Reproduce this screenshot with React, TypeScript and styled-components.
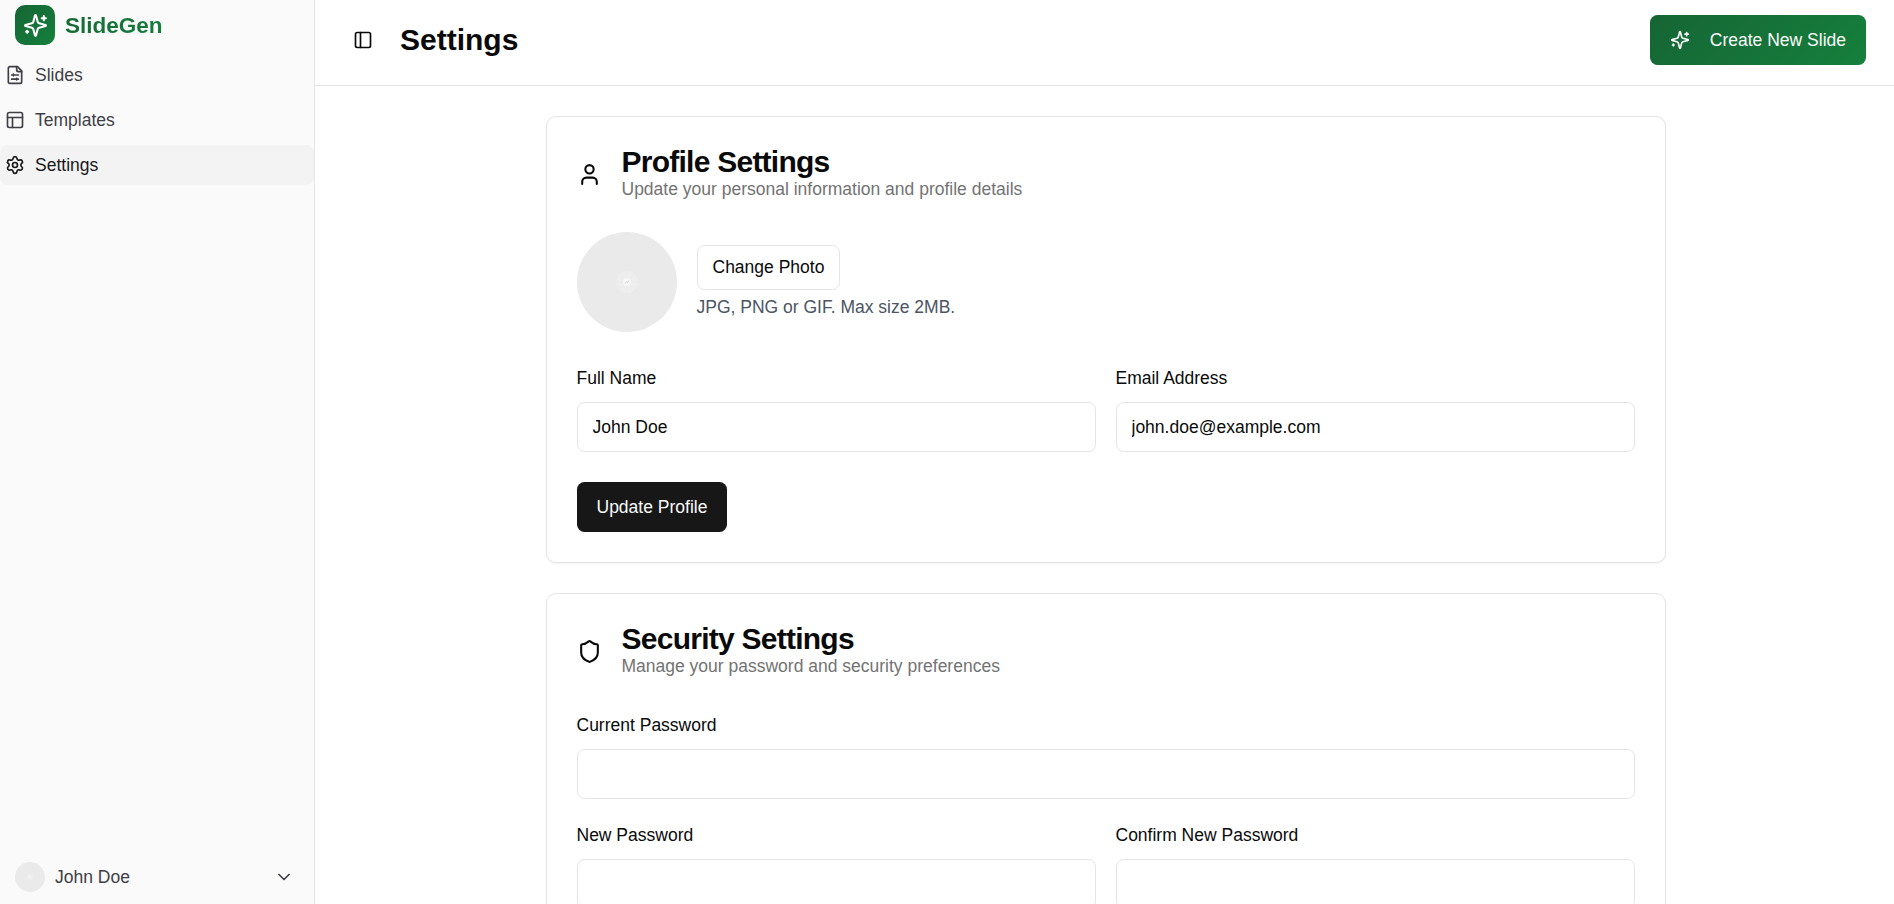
import React from 'react';
import styled, { createGlobalStyle, css } from 'styled-components';
import { ChevronDown, PanelLeft, Settings, Shield, User } from 'lucide-react';

const GlobalStyle = createGlobalStyle`
  *, *::before, *::after { box-sizing: border-box; }
  body {
    margin: 0;
    background: #fff;
    color: #0a0a0a;
    font-family: "Liberation Sans", Arial, Helvetica, sans-serif;
    font-size: 20px;
    line-height: 30px;
    overflow: hidden;
  }
  button, input { font: inherit; color: inherit; }
  svg { flex-shrink: 0; display: block; }
`;

const green = css`linear-gradient(135deg, #166534, #15803d)`;

const Page = styled.div`
  display: flex;
  height: 100vh;
  overflow: hidden;
`;

const Sidebar = styled.aside`
  display: flex;
  flex-direction: column;
  flex: 0 0 315px;
  background: #fafafa;
  border-right: 1px solid #e5e5e5;
  color: #3f3f46;
  font-size: 17.5px;
  line-height: 25px;
`;

const Brand = styled.div`
  display: flex;
  align-items: center;
  gap: 10px;
  padding: 5px 15px 0;
`;

const BrandMark = styled.div`
  display: grid;
  place-items: center;
  width: 40px;
  height: 40px;
  border-radius: 10px;
  background: ${green};
  color: #fff;
`;

const BrandName = styled.span`
  font-size: 22.5px;
  line-height: 35px;
  font-weight: 700;
  background: ${green};
  background-clip: text;
  -webkit-background-clip: text;
  color: transparent;
`;

const Nav = styled.nav`
  display: flex;
  flex-direction: column;
  gap: 5px;
  padding-top: 10px;
  flex: 1;
`;

const NavItem = styled.a<{ $active?: boolean }>`
  display: flex;
  align-items: center;
  gap: 10px;
  height: 40px;
  padding: 0 5px;
  border-radius: 7.5px;
  background: ${(p) => (p.$active ? '#f3f3f3' : 'transparent')};
  color: ${(p) => (p.$active ? '#18181b' : '#3f3f46')};
`;

const Account = styled.div`
  display: flex;
  align-items: center;
  gap: 10px;
  padding: 0 20px 12px 15px;
  span { flex: 1; }
`;

const Content = styled.div`
  flex: 1;
  min-width: 0;
`;

const Header = styled.header`
  display: flex;
  align-items: center;
  height: 86px;
  padding: 0 28px 5px 38px;
  border-bottom: 1px solid #e5e5e5;
`;

const PageTitle = styled.h1`
  flex: 1;
  margin: 0 0 0 27px;
  font-size: 30px;
  line-height: 40px;
  font-weight: 700;
`;

const Button = styled.button<{ $variant: 'brand' | 'dark' | 'outline' }>`
  display: inline-flex;
  align-items: center;
  gap: 20px;
  height: ${(p) => (p.$variant === 'outline' ? 45 : 50)}px;
  padding: 0 ${(p) => (p.$variant === 'outline' ? 15 : 20)}px;
  border: ${(p) => (p.$variant === 'outline' ? '1px solid #e5e5e5' : '0')};
  border-radius: 7.5px;
  font-size: 17.5px;
  line-height: 25px;
  white-space: nowrap;
  background: ${(p) => (p.$variant === 'dark' ? '#171717' : '#fff')};
  color: ${(p) => (p.$variant === 'outline' ? '#0a0a0a' : '#fafafa')};
  ${(p) => p.$variant === 'brand' && css`background: ${green};`}
`;

const Main = styled.main`
  display: flex;
  flex-direction: column;
  align-items: center;
  gap: 30px;
  padding: 30px 0 30px 2px;
`;

const Card = styled.section`
  width: 1120px;
  padding: 30px;
  border: 1px solid #e5e5e5;
  border-radius: 10px;
  background: #fff;
  box-shadow: 0 1px 2px rgba(0, 0, 0, 0.05);
`;

const CardHeader = styled.div`
  display: flex;
  align-items: center;
  gap: 20px;
  margin-bottom: 30px;
`;

const CardTitle = styled.h2`
  margin: 0;
  font-size: 30px;
  line-height: 30px;
  font-weight: 700;
  letter-spacing: -0.025em;
`;

const CardDescription = styled.p`
  margin: 0;
  font-size: 17.5px;
  line-height: 25px;
  color: #737373;
`;

const PhotoRow = styled.div`
  display: flex;
  align-items: center;
  gap: 20px;
  margin-bottom: 30px;
`;

const Hint = styled.p`
  margin: 5px 0 0;
  font-size: 17.5px;
  line-height: 25px;
  color: #4b5563;
`;

const PhotoActions = styled.div`
  display: flex;
  flex-direction: column;
  align-items: flex-start;
`;

const Fields = styled.div<{ $columns: number }>`
  display: grid;
  grid-template-columns: repeat(${(p) => p.$columns}, 1fr);
  gap: 20px;
  & + & { margin-top: 20px; }
`;

const FieldGroup = styled.div<{ $spaced?: boolean }>`
  display: flex;
  flex-direction: column;
  gap: 20px;
`;

const Actions = styled.div`
  display: flex;
  margin-top: 30px;
`;

const Label = styled.label`
  font-size: 17.5px;
  line-height: 1;
`;

const Input = styled.input`
  display: block;
  width: 100%;
  height: 50px;
  margin-top: 10px;
  padding: 0 15px;
  border: 1px solid #e5e5e5;
  border-radius: 7.5px;
  background: #fff;
  font-size: 17.5px;
  line-height: 25px;
  outline: none;
`;

const Sparkles = ({ size }: { size: number }) => (
  <svg width={size} height={size} viewBox="0 0 24 24" fill="none" stroke="currentColor" strokeWidth="2" strokeLinecap="round" strokeLinejoin="round">
    <path d="M9.937 15.5A2 2 0 0 0 8.5 14.063l-6.135-1.582a.5.5 0 0 1 0-.962L8.5 9.936A2 2 0 0 0 9.937 8.5l1.582-6.135a.5.5 0 0 1 .963 0L14.063 8.5A2 2 0 0 0 15.5 9.937l6.135 1.581a.5.5 0 0 1 0 .964L15.5 14.063a2 2 0 0 0-1.437 1.437l-1.582 6.135a.5.5 0 0 1-.963 0z" />
    <path d="M20 3v4M22 5h-4M4 17v2M5 18H3" />
  </svg>
);

const FileSliders = () => (
  <svg width="20" height="20" viewBox="0 0 24 24" fill="none" stroke="currentColor" strokeWidth="2" strokeLinecap="round" strokeLinejoin="round">
    <path d="M15 2H6a2 2 0 0 0-2 2v16a2 2 0 0 0 2 2h12a2 2 0 0 0 2-2V7Z" />
    <path d="M14 2v4a2 2 0 0 0 2 2h4M8 12h8M10 11v2M8 17h8M14 16v2" />
  </svg>
);

const LayoutIcon = () => (
  <svg width="20" height="20" viewBox="0 0 24 24" fill="none" stroke="currentColor" strokeWidth="2" strokeLinecap="round" strokeLinejoin="round">
    <rect width="18" height="18" x="3" y="3" rx="2" />
    <path d="M3 9h18M9 21V9" />
  </svg>
);

const Avatar = ({ size }: { size: number }) => (
  <svg width={size} height={size} viewBox="0 0 100 100" fill="none">
    <circle cx="50" cy="50" r="50" fill="#eaeaea" />
    <circle cx="50" cy="50" r="11" fill="#eeeeee" />
    <path d="M36 36l28 28M64 36L36 64M50 37v26M37 50h26" stroke="#e7e7e7" strokeWidth="0.6" />
    <circle cx="50" cy="50" r="4" fill="#f7f7f7" />
    <path d="M48.5 51.5l1-2 1.3 1 .9-2" stroke="#cccccc" strokeWidth="0.8" />
  </svg>
);

const Field = ({ id, label, value = '', type = 'text' }: { id: string; label: string; value?: string; type?: string }) => (
  <div>
    <Label htmlFor={id}>{label}</Label>
    <Input id={id} type={type} defaultValue={value} />
  </div>
);

export default function App() {
  return (
    <Page>
      <GlobalStyle />
      <Sidebar>
        <Brand>
          <BrandMark><Sparkles size={25} /></BrandMark>
          <BrandName>SlideGen</BrandName>
        </Brand>
        <Nav>
          <NavItem><FileSliders />Slides</NavItem>
          <NavItem><LayoutIcon />Templates</NavItem>
          <NavItem $active><Settings size={20} />Settings</NavItem>
        </Nav>
        <Account>
          <Avatar size={30} />
          <span>John Doe</span>
          <ChevronDown size={20} />
        </Account>
      </Sidebar>
      <Content>
        <Header>
          <PanelLeft size={20} />
          <PageTitle>Settings</PageTitle>
          <Button $variant="brand"><Sparkles size={20} />Create New Slide</Button>
        </Header>
        <Main>
          <Card>
            <CardHeader>
              <User size={25} />
              <div>
                <CardTitle>Profile Settings</CardTitle>
                <CardDescription>Update your personal information and profile details</CardDescription>
              </div>
            </CardHeader>
            <PhotoRow>
              <Avatar size={100} />
              <PhotoActions>
                <Button $variant="outline">Change Photo</Button>
                <Hint>JPG, PNG or GIF. Max size 2MB.</Hint>
              </PhotoActions>
            </PhotoRow>
            <Fields $columns={2}>
              <Field id="name" label="Full Name" value="John Doe" />
              <Field id="email" label="Email Address" value="john.doe@example.com" />
            </Fields>
            <Actions>
              <Button $variant="dark">Update Profile</Button>
            </Actions>
          </Card>
          <Card>
            <CardHeader>
              <Shield size={25} />
              <div>
                <CardTitle>Security Settings</CardTitle>
                <CardDescription>Manage your password and security preferences</CardDescription>
              </div>
            </CardHeader>
            <FieldGroup>
              <Field id="current" label="Current Password" type="password" />
              <Fields $columns={2}>
                <Field id="new" label="New Password" type="password" />
                <Field id="confirm" label="Confirm New Password" type="password" />
              </Fields>
            </FieldGroup>
          </Card>
        </Main>
      </Content>
    </Page>
  );
}
